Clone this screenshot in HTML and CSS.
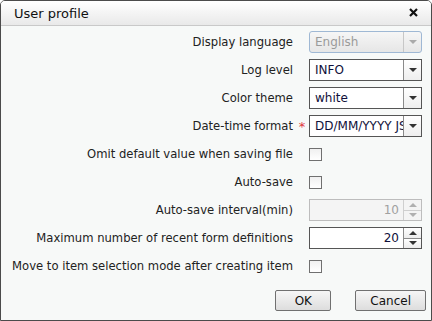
FILE: index.html
```html
<!DOCTYPE html>
<html lang="en">
<head>
    <meta charset="UTF-8">
    <title>User profile</title>
    <link rel="stylesheet" href="styles.css">
</head>
<body>
    <div class="dialog">
        <div class="titlebar">
            <span class="title">User profile</span>
            <svg class="close" width="9" height="9" viewBox="0 0 9 9"><path d="M1 1 L8 8 M8 1 L1 8" stroke="#111" stroke-width="2.2"/></svg>
        </div>

        <div class="form">
            <label class="lbl">Display language</label><span class="mark"></span>
            <div class="select disabled"><span class="val">English</span><span class="arrow"><i></i></span></div>

            <label class="lbl">Log level</label><span class="mark"></span>
            <div class="select"><span class="val">INFO</span><span class="arrow"><i></i></span></div>

            <label class="lbl">Color theme</label><span class="mark"></span>
            <div class="select"><span class="val">white</span><span class="arrow"><i></i></span></div>

            <label class="lbl">Date-time format</label><span class="mark">*</span>
            <div class="select"><span class="val">DD/MM/YYYY JST</span><span class="arrow"><i></i></span></div>

            <label class="lbl">Omit default value when saving file</label><span class="mark"></span>
            <div class="cell"><span class="check"></span></div>

            <label class="lbl">Auto-save</label><span class="mark"></span>
            <div class="cell"><span class="check"></span></div>

            <label class="lbl">Auto-save interval(min)</label><span class="mark"></span>
            <div class="spin disabled"><span class="val">10</span><span class="btns"><b><i class="up"></i></b><b><i></i></b></span></div>

            <label class="lbl">Maximum number of recent form definitions</label><span class="mark"></span>
            <div class="spin"><span class="val">20</span><span class="btns"><b><i class="up"></i></b><b><i></i></b></span></div>

            <label class="lbl">Move to item selection mode after creating item</label><span class="mark"></span>
            <div class="cell"><span class="check"></span></div>
        </div>

        <div class="buttons">
            <button class="btn">OK</button>
            <button class="btn">Cancel</button>
        </div>
    </div>
</body>
</html>
```

FILE: styles.css
```css
body {
    margin: 0;
    font-family: 'DejaVu Sans', sans-serif;
    font-size: 11.6px;
    color: #222;
}
.dialog {
    width: 432px;
    height: 321px;
    box-sizing: border-box;
    border: 1px solid #4b4b4b;
    border-radius: 5px 5px 0 0;
    background-color: #f7f9f8;
    display: flex;
    flex-direction: column;
}
.titlebar {
    height: 24px;
    border-bottom: 1px solid #c9c9c9;
    border-radius: 4px 4px 0 0;
    background: linear-gradient(#ffffff, #e9e9e9);
    display: flex;
    align-items: center;
    justify-content: space-between;
    padding: 0 13px 0 13px;
}
.title {
    font-size: 13px;
    color: #111;
}
.close {
    margin-top: -2px;
}
.form {
    display: grid;
    grid-template-columns: 1fr 16px 113px;
    grid-auto-rows: 22px;
    row-gap: 6px;
    padding: 5px 9px 0 10px;
}
.lbl {
    text-align: right;
    align-self: center;
    white-space: nowrap;
}
.mark {
    color: #e0383e;
    font-size: 13px;
    text-align: center;
    align-self: center;
    padding-left: 2px;
}
.cell {
    display: flex;
    align-items: center;
}
.check {
    width: 11px;
    height: 11px;
    border: 1px solid #707070;
    background: linear-gradient(#f0f0f0, #ffffff);
}
.select, .spin {
    display: flex;
    box-sizing: border-box;
    border: 1px solid #555;
    background-color: #fff;
    overflow: hidden;
}
.val {
    flex: 1;
    padding: 0 5px;
    line-height: 20px;
    font-size: 12px;
    color: #10103a;
    white-space: nowrap;
    overflow: hidden;
}
.arrow {
    width: 17px;
    border-left: 1px solid #8a8a8a;
    background: linear-gradient(#ffffff, #eeeeee);
    display: flex;
    align-items: center;
    justify-content: center;
}
.arrow i, .btns i {
    width: 0;
    height: 0;
    border-left: 4px solid transparent;
    border-right: 4px solid transparent;
    border-top: 4px solid #333;
}
.btns i.up {
    border-top: none;
    border-bottom: 4px solid #333;
}
.select.disabled {
    border-color: #9fb8d4;
    border-radius: 3px;
    background: linear-gradient(#f6f6f6, #e6e6e6);
}
.select.disabled .val {
    color: #9a9a9a;
}
.select.disabled .arrow {
    background: none;
    border-left-color: #c7c7c7;
}
.select.disabled .arrow i {
    border-top-color: #aaa;
}
.spin .val {
    text-align: right;
    padding-right: 4px;
}
.btns {
    width: 17px;
    border-left: 1px solid #8a8a8a;
    display: flex;
    flex-direction: column;
}
.btns b {
    flex: 1;
    display: flex;
    align-items: center;
    justify-content: center;
    background: linear-gradient(#ffffff, #ececec);
}
.btns b + b {
    border-top: 1px solid #8a8a8a;
}
.spin.disabled {
    border-color: #bdbdbd;
    background-color: #f4f4f4;
}
.spin.disabled .val {
    color: #a0a0a0;
}
.spin.disabled .btns, .spin.disabled .btns b + b {
    border-color: #cfcfcf;
}
.spin.disabled .btns b {
    background: #f4f4f4;
}
.spin.disabled .btns i {
    border-top-color: #b0b0b0;
    border-bottom-color: #b0b0b0;
}
.buttons {
    margin-top: auto;
    display: flex;
    justify-content: flex-end;
    gap: 24px;
    padding: 0 5px 9px 0;
}
.btn {
    height: 21px;
    min-width: 56px;
    padding: 0 14px;
    border: 1px solid #707070;
    border-radius: 2px;
    background: linear-gradient(#f6f6f6, #dddddd);
    font-family: 'DejaVu Sans', sans-serif;
    font-size: 12px;
    color: #111;
}
```
